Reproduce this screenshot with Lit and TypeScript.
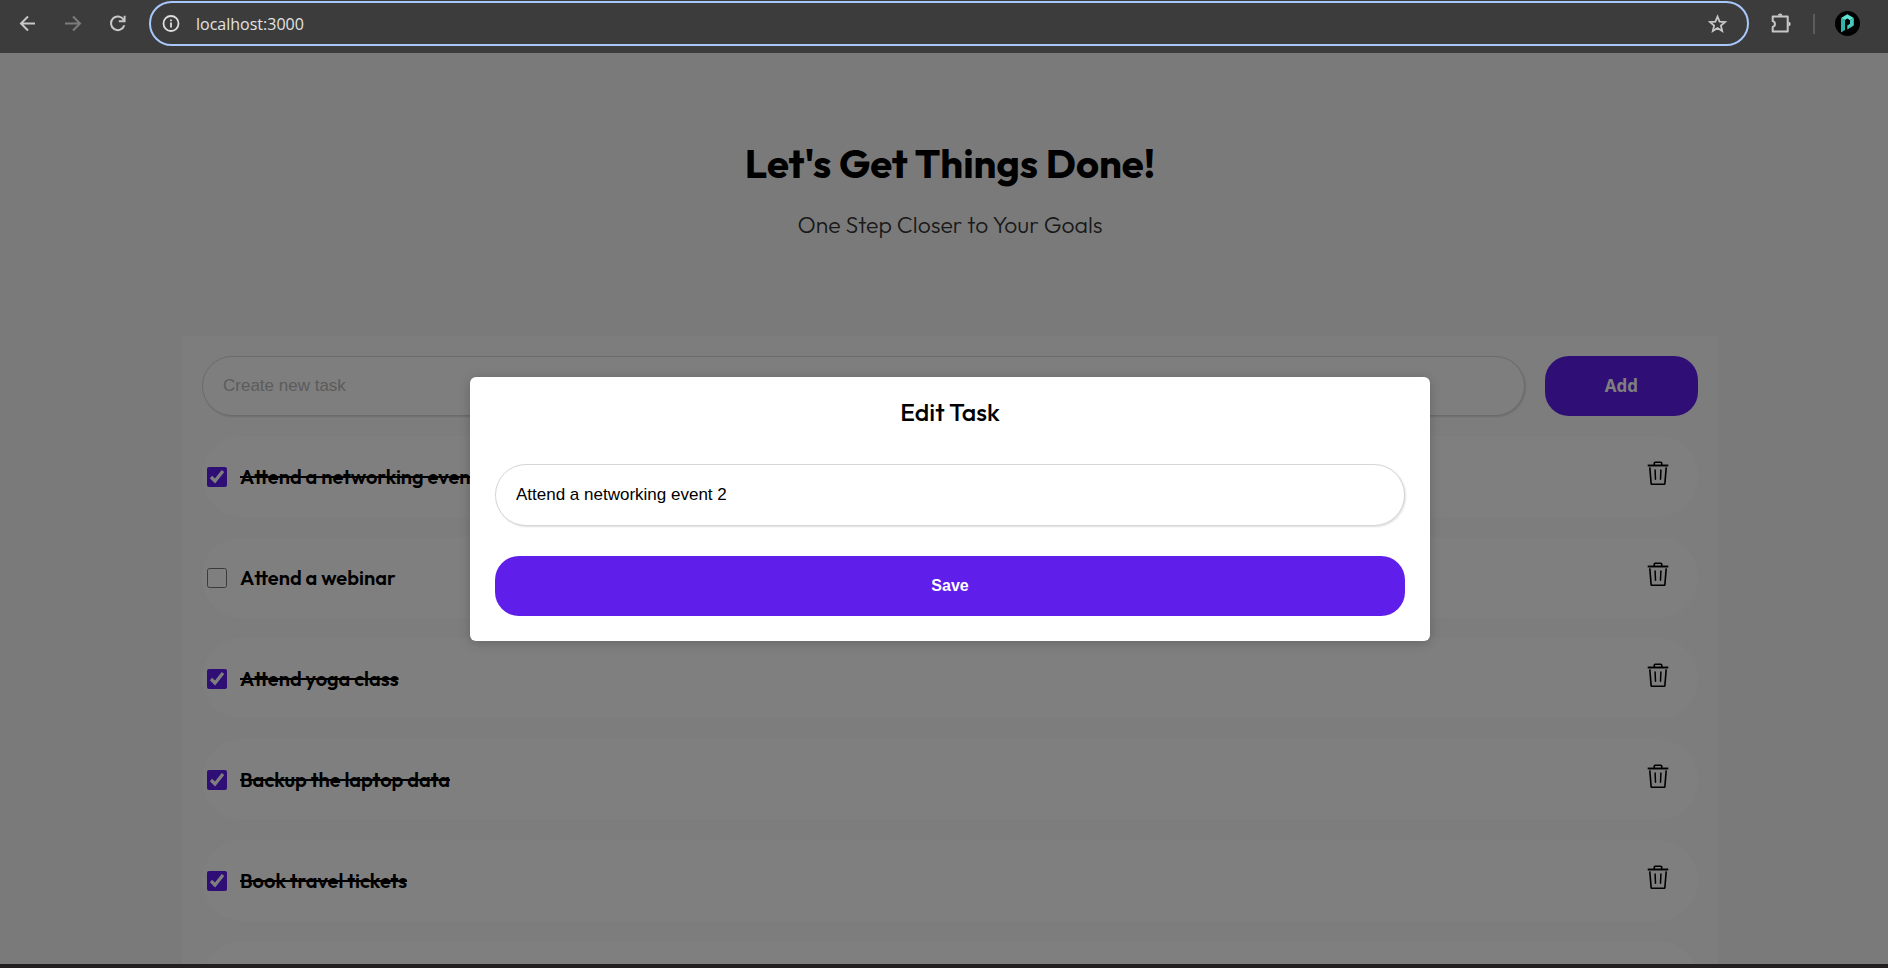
import { LitElement, html, css, svg } from "lit";
import { customElement, state } from "lit/decorators.js";
import { classMap } from "lit/directives/class-map.js";

interface Task {
  title: string;
  done: boolean;
}

const trashIcon = svg`
  <svg viewBox="0 0 24 24" width="24" height="24" fill="none" stroke="currentColor" aria-hidden="true">
    <path stroke-width="1.900" d="M1.700 4.500h20.600" />
    <path stroke-width="1.600" d="M8.300 4.200V2.100Q8.300 1.200 9.200 1.200h5.600q.9 0 .9.900v2.100" />
    <path stroke-width="1.600" d="M3.800 6.400l1.300 16q.1 1 1.100 1h11.600q1 0 1.100-1l1.300-16" />
    <path stroke-width="1.500" stroke-linecap="round" d="M9.100 9l.4 9.200M14.900 9l-.4 9.200" />
  </svg>
`;

@customElement("browser-bar")
class BrowserBar extends LitElement {
  static styles = css`
    :host {
      display: block;
      background: #3c3c3c;
      color: #c7c7c7;
      font-family: "Open Sans", "Noto Sans", sans-serif;
    }
    .bar {
      display: flex;
      align-items: center;
      padding: 1px 28px 7px 16px;
    }
    button {
      display: flex;
      padding: 0;
      border: 0;
      background: none;
      color: inherit;
    }
    .nav {
      display: flex;
      gap: 21px;
      margin-right: 19px;
    }
    .dim {
      color: #7c7c7c;
    }
    .address {
      flex: 1;
      display: flex;
      align-items: center;
      box-sizing: border-box;
      height: 45px;
      padding: 0 19px 0 10px;
      border: 2px solid #a8c7fa;
      border-radius: 23px;
    }
    .url {
      flex: 1;
      min-width: 0;
      margin-left: 15px;
      padding: 0;
      border: 0;
      outline: 0;
      background: none;
      color: #e3e3e3;
      font: 16px/24px "Open Sans", "Noto Sans", sans-serif;
    }
    .tools {
      display: flex;
      align-items: center;
      gap: 20px;
      margin-left: 20px;
    }
    .divider {
      width: 2px;
      height: 20px;
      background: #5c5c5c;
    }
  `;

  render() {
    return html`
      <div class="bar">
        <div class="nav">
          <button aria-label="Back">
            <svg width="24" height="24" viewBox="0 0 24 24" fill="none" stroke="currentColor" stroke-width="2">
              <path d="M19 11.500H5.500M12 4.500l-7 7 7 7" />
            </svg>
          </button>
          <button class="dim" aria-label="Forward">
            <svg width="24" height="24" viewBox="0 0 24 24" fill="none" stroke="currentColor" stroke-width="2">
              <path d="M4 11.500h14.500M12 4.500l7 7-7 7" />
            </svg>
          </button>
          <button aria-label="Reload">
            <svg width="24" height="24" viewBox="0 0 24 24" fill="none" stroke="currentColor" stroke-width="2">
              <path d="M18.300 13.200A6.800 6.800 0 1 1 17.600 7.800L18.300 8.900" />
              <path d="M18.600 3.800v5.500h-5.800" />
            </svg>
          </button>
        </div>
        <div class="address">
          <svg width="20" height="20" viewBox="0 0 20 20" fill="none" stroke="#dedede" stroke-width="1.800" aria-hidden="true">
            <circle cx="10" cy="9.500" r="7.500" />
            <path d="M10 8.500v5M10 5.500v1.800" />
          </svg>
          <input class="url" type="text" aria-label="Address" .value=${"localhost:3000"} />
          <button aria-label="Bookmark this page">
            <svg width="20" height="20" viewBox="0 0 20 20" fill="none" stroke="currentColor" stroke-width="1.800">
              <path d="M9.500 2.600l2.100 5 5.500.4-4.200 3.600 1.300 5.400-4.700-2.900-4.700 2.900 1.300-5.400L1.900 8l5.500-.4z" />
            </svg>
          </button>
        </div>
        <div class="tools">
          <button aria-label="Extensions">
            <svg width="24" height="24" viewBox="0 0 24 24" fill="none" stroke="currentColor" stroke-width="2" stroke-linejoin="round">
              <path d="M3.700 4.500h15V19.500h-15v-4.600a3 3 0 0 0 0-5.800z" />
              <path fill="currentColor" stroke="none" d="M8.900 3.800a2.300 2.300 0 0 1 4.600 0zM19.400 9.700a2.300 2.300 0 0 1 0 4.600z" />
            </svg>
          </button>
          <span class="divider"></span>
          <button aria-label="Profile">
            <svg width="25" height="25" viewBox="0 0 25 25">
              <circle cx="12.500" cy="12.500" r="12.500" fill="#000" />
              <path fill="#2fb5a8" d="M6 7l4 2v10l-4 2.500z" />
              <path fill="#5fe3d3" d="M6 7l6.300-3.800L18.800 7l-3.800 2.200-2.700-1.600L10 9z" />
              <path fill="#43cabd" d="M18.800 7v7.600l-6.500 3.900v-4l2.700-1.700V9.200z" />
            </svg>
          </button>
        </div>
      </div>
    `;
  }
}

@customElement("app-root")
class AppRoot extends LitElement {
  @state() private tasks: Task[] = [
    { title: "Attend a networking event", done: true },
    { title: "Attend a webinar", done: false },
    { title: "Attend yoga class", done: true },
    { title: "Backup the laptop data", done: true },
    { title: "Book travel tickets", done: true },
    { title: "", done: false },
  ];

  static styles = css`
    :host {
      display: flex;
      flex-direction: column;
      height: 100vh;
      overflow: hidden;
      font-family: Outfit, Lato, sans-serif;
      color: #000;
    }
    .viewport {
      position: relative;
      flex: 1;
      min-height: 0;
      overflow: hidden;
      background: #f5f5f5;
    }
    .page,
    .overlay {
      margin: 0 -22px 0 -10px;
    }
    .header {
      padding: 86px 0 97px;
      text-align: center;
    }
    h1 {
      margin: 0 0 24px;
      font-size: 40px;
      line-height: 48px;
      font-weight: 700;
    }
    .tagline {
      margin: 0;
      font-size: 23px;
      line-height: 28px;
      font-weight: 300;
      color: #333;
    }
    .card {
      box-sizing: border-box;
      width: 80%;
      margin: 0 auto;
      padding: 20px;
      background: #fbfbfb;
    }
    .create {
      display: flex;
      gap: 20px;
      margin-bottom: 20px;
    }
    .field {
      box-sizing: border-box;
      flex: 1;
      min-width: 0;
      height: 60px;
      padding: 0 20px;
      border: 1px solid #d6d6d6;
      border-radius: 31px;
      outline: 0;
      background: #fff;
      box-shadow: 1px 1px 2px rgba(0, 0, 0, 0.13);
      color: #000;
      font: 17px/20px "Liberation Sans", Arial, sans-serif;
    }
    .create .field {
      background: #fdfdfd;
    }
    .field::placeholder {
      color: #b8b8b8;
    }
    .primary {
      height: 60px;
      padding: 0 60px;
      border: 0;
      border-radius: 24px;
      background: #5f1eea;
      color: #fff;
      font: 700 17px/20px "Open Sans", "Noto Sans", sans-serif;
    }
    .tasks {
      display: flex;
      flex-direction: column;
      gap: 20px;
      margin: 0;
      padding: 0;
      list-style: none;
    }
    .task {
      display: flex;
      align-items: center;
      height: 81px;
      padding: 0 28px 0 5px;
      border-radius: 41px;
      background: #fefefe;
    }
    .check {
      width: 20px;
      height: 20px;
      margin: 0 13px 0 0;
      accent-color: #5f1eea;
    }
    .name {
      flex: 1;
      font-size: 20px;
      line-height: 24px;
      font-weight: 600;
    }
    .done {
      text-decoration: line-through 2px;
    }
    .trash {
      display: flex;
      padding: 0 0 8px;
      border: 0;
      background: none;
      color: #000;
    }
    .overlay {
      position: absolute;
      inset: 0;
      display: flex;
      align-items: center;
      justify-content: center;
      background: rgba(0, 0, 0, 0.5);
    }
    .modal {
      box-sizing: border-box;
      display: flex;
      flex-direction: column;
      width: 50%;
      padding: 20px 25px 25px;
      border-radius: 6px;
      background: #fff;
      box-shadow: 0 2px 12px rgba(0, 0, 0, 0.2);
    }
    .modal h2 {
      margin: 0 0 37px;
      font-size: 25px;
      line-height: 30px;
      font-weight: 500;
      text-align: center;
    }
    .modal .field {
      flex: none;
      height: 62px;
      margin-bottom: 30px;
    }
    .modal .primary {
      font: 700 16px/20px "Liberation Sans", Arial, sans-serif;
    }
    .edge {
      height: 4px;
      background: #231f20;
    }
  `;

  private toggle(index: number) {
    this.tasks = this.tasks.map((t, i) => (i === index ? { ...t, done: !t.done } : t));
  }

  render() {
    return html`
      <browser-bar></browser-bar>
      <div class="viewport">
        <main class="page">
          <header class="header">
            <h1>Let's Get Things Done!</h1>
            <p class="tagline">One Step Closer to Your Goals</p>
          </header>
          <section class="card">
            <form class="create" @submit=${(e: Event) => e.preventDefault()}>
              <input class="field" type="text" placeholder="Create new task" aria-label="Create new task" />
              <button class="primary" type="submit">Add</button>
            </form>
            <ul class="tasks">
              ${this.tasks.map(
                (task, i) => html`
                  <li class="task">
                    <input class="check" type="checkbox" id="task-${i}" .checked=${task.done} @change=${() => this.toggle(i)} />
                    <label class="name" for="task-${i}"><span class=${classMap({ done: task.done })}>${task.title}</span></label>
                    <button class="trash" aria-label="Delete task">${trashIcon}</button>
                  </li>
                `
              )}
            </ul>
          </section>
        </main>
        <div class="overlay">
          <div class="modal" role="dialog" aria-modal="true" aria-labelledby="edit-title">
            <h2 id="edit-title">Edit Task</h2>
            <input class="field" type="text" aria-labelledby="edit-title" .value=${"Attend a networking event 2"} />
            <button class="primary" type="button">Save</button>
          </div>
        </div>
      </div>
      <div class="edge"></div>
    `;
  }
}
